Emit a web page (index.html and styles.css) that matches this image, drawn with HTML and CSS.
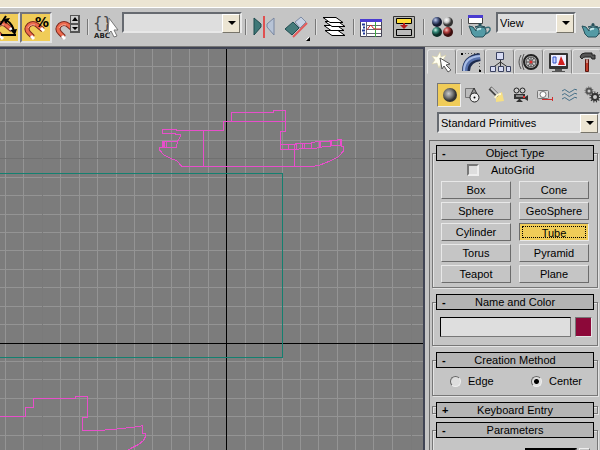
FILE: index.html
```
<!DOCTYPE html>
<html lang="en">
  <head>
    <meta charset="UTF-8" />
    <meta name="viewport" content="width=device-width, initial-scale=1.0" />
    <title>Modeler</title>
    <link rel="stylesheet" href="styles.css">
  </head>
  <body>
    <div class="menu-strip"></div>

    <div class="toolbar">
      <button class="tool wide snap on" aria-label="Angle snap">
        <svg viewBox="-10 14 28 28" width="28" height="28">
          <g id="magnet" transform="translate(-31 0)">
            <path d="M33 37L29 33Q25 29 29 25Q33 22 37 25L43 30" fill="none" stroke="#7c2a20" stroke-width="5" />
            <path d="M33 37L29 33Q25 29 29 25Q33 22 37 25L43 30" fill="none" stroke="#ee6a4e" stroke-width="3" />
            <path d="M28 28Q30 24 35 25" fill="none" stroke="#f9b09c" />
            <path d="M31 36l3 3M41 28l3 3" stroke="#fff" stroke-width="3" />
          </g>
          <path d="M1 35H16M0 25L6 16M6 20Q13 24 14 32" fill="none" stroke="#000" stroke-width="2" />
          <path d="M3 19l7-1-4 6zM10 30l7-1-2 6z" />
        </svg>
      </button>
      <button class="tool wide snap on" aria-label="Percent snap">
        <svg viewBox="22 14 28 28" width="28" height="28">
          <use href="#magnet" x="31" />
          <text x="35" y="27" class="icon-percent">%</text>
        </svg>
      </button>
      <button class="tool wide" aria-label="Spinner snap">
        <svg viewBox="52 8 32 38" width="32" height="38">
          <use href="#magnet" x="62" />
          <path d="M70 15h10v18H70z" fill="#555" />
          <path d="M71 16h7v7h-7zM71 25h7v6h-7z" fill="#ccc" />
          <path d="M72 21h6l-3-4zM72 27h6l-3 3z" />
        </svg>
      </button>
      <span class="separator"></span>
      <button class="tool" aria-label="Named selection sets">
        <svg viewBox="92 8 30 38" width="30" height="38">
          <text x="93" y="28" class="icon-braces">{}</text>
          <text x="94" y="38" class="icon-abc">ABC</text>
          <path d="M109 18l9 12h-4l3 6-3 1-3-6-3 3z" fill="#fff" stroke="#777" />
        </svg>
      </button>
      <div class="dropdown named-sets">
        <select aria-label="Selection set"><option></option></select>
      </div>
      <span class="separator"></span>
      <button class="tool" aria-label="Mirror">
        <svg viewBox="250 8 30 38" width="30" height="38">
          <path d="M254 18l7 6v3l-7 8z" fill="#3f7878" stroke="#1d4a4d" />
          <path d="M274 18l-7 6v3l7 8z" fill="#b7c3d6" stroke="#7886a0" />
          <path d="M264 16v22" stroke="#e05050" stroke-width="2" />
        </svg>
      </button>
      <button class="tool wide" aria-label="Align">
        <svg viewBox="280 8 32 38" width="32" height="38">
          <path d="M285 29l8-7 6 6-7 7z" fill="#467b7b" stroke="#1e4c50" />
          <path d="M295 22l6-5 5 5-6 6z" fill="#c7d2e3" stroke="#7d8ba4" />
          <path d="M293 37l14-14" stroke="#e25a5a" stroke-width="2" />
          <path d="M310 37v4h-4z" />
          <path d="M309 37l-3 3" stroke="#fff" />
        </svg>
      </button>
      <span class="separator"></span>
      <button class="tool" aria-label="Layers">
        <svg viewBox="320 8 30 38" width="30" height="38">
          <g fill="#fff" stroke="#000">
            <path d="M325 30.500h13l7 5h-13z" />
            <path d="M324 25.500h13l7 5h-13z" />
            <path d="M325 21.500h13l7 5h-13z" />
            <path d="M323 17.500h13l7 5h-13z" />
          </g>
        </svg>
      </button>
      <span class="separator"></span>
      <button class="tool" aria-label="Curve editor">
        <svg viewBox="358 8 30 38" width="30" height="38">
          <path d="M360.500 19.500h21v17h-21z" fill="#fff" stroke="#445" />
          <path d="M360 19h22v3h-22z" fill="#4a3cd0" />
          <path d="M362 24.500h3M363 27.500h2M362 30.500h3M363 33.500h2" stroke="#223a9a" stroke-width="2" />
          <path d="M366.500 22v15M366 25.500h15M366 29.500h15M366 33.500h15" stroke="#667" />
          <path d="M375.500 22v15" stroke="#3faa3f" />
          <path d="M367 30l2-3 2-2 2 3 2 1h6" fill="none" stroke="#d03030" />
        </svg>
      </button>
      <button class="tool wide" aria-label="Schematic view">
        <svg viewBox="388 8 32 38" width="32" height="38">
          <path d="M393.500 16.500h21v21h-21z" fill="#b9b9b5" stroke="#333" />
          <path d="M396.500 18.500h15v5h-15z" fill="#ffde38" stroke="#000" />
          <path d="M396.500 29.500h15v6h-15z" fill="#bbb" stroke="#000" />
          <path d="M403 23h2v2h3l-4 4-4-4h3z" fill="#b51d1d" />
        </svg>
      </button>
      <span class="separator"></span>
      <button class="tool" aria-label="Material editor">
        <svg viewBox="428 8 30 38" width="30" height="38">
          <defs>
            <radialGradient id="blue" cx=".35" cy=".3"><stop stop-color="#c3cbe8" /><stop offset=".5" stop-color="#56658f" /><stop offset="1" stop-color="#151a30" /></radialGradient>
            <radialGradient id="white" cx=".35" cy=".3"><stop stop-color="#fff" /><stop offset=".5" stop-color="#ccc" /><stop offset="1" stop-color="#333" /></radialGradient>
            <radialGradient id="green" cx=".35" cy=".3"><stop stop-color="#c8f0e4" /><stop offset=".5" stop-color="#318474" /><stop offset="1" stop-color="#0b2e28" /></radialGradient>
            <radialGradient id="red" cx=".35" cy=".3"><stop stop-color="#f4c4c0" /><stop offset=".5" stop-color="#b5403f" /><stop offset="1" stop-color="#3c0e0e" /></radialGradient>
            <radialGradient id="gray" cx=".4" cy=".4"><stop stop-color="#ccc" /><stop offset=".6" stop-color="#777" /><stop offset="1" stop-color="#333" /></radialGradient>
          </defs>
          <circle cx="437" cy="22" r="5" fill="url(#blue)" />
          <circle cx="448" cy="22" r="5" fill="url(#white)" />
          <circle cx="437" cy="32" r="5" fill="url(#green)" />
          <circle cx="448" cy="32" r="5" fill="url(#red)" />
        </svg>
      </button>
      <span class="separator"></span>
      <button class="tool" aria-label="Render scene">
        <svg viewBox="466 8 30 38" width="30" height="38">
          <path d="M468.500 15.500h14v8h-14z" fill="#fff" stroke="#444" />
          <path d="M468 15h15v3h-15z" fill="#4a3cd0" />
          <g id="teapot">
            <path d="M485 28q6-2 5 2-1 3-5 4" fill="none" stroke="#376d78" stroke-width="1.500" />
            <path d="M469 26l4 1 3 4v-2q4-4 9-1 3 5-2 9h-8q-4-3-4-6z" fill="#539aa5" stroke="#28515a" />
            <path d="M475 27q5-3 10 0z" fill="#86bcc4" stroke="#28515a" />
            <circle cx="480" cy="24.500" r="1.500" fill="#28515a" />
            <path d="M477 30q2-2 4-1" fill="none" stroke="#c2e5e8" stroke-width="2" />
          </g>
        </svg>
      </button>
      <div class="dropdown render-view">
        <select aria-label="Render view"><option>View</option></select>
      </div>
      <button class="tool" aria-label="Quick render">
        <svg viewBox="576 8 30 38" width="30" height="38"><use href="#teapot" x="113" /></svg>
      </button>
    </div>

    <div class="workspace">
      <main class="viewport">
        <svg viewBox="0 49 423 401" preserveAspectRatio="xMinYMin slice" shape-rendering="crispEdges">
          <path class="grid" d="M5.500 49v401M23.500 49v401M60.500 49v401M79.500 49v401M97.500 49v401M116.500 49v401M134.500 49v401M152.500 49v401M171.500 49v401M189.500 49v401M208.500 49v401M245.500 49v401M263.500 49v401M282.500 49v401M300.500 49v401M318.500 49v401M337.500 49v401M355.500 49v401M373.500 49v401M392.500 49v401" />
          <path class="grid" d="M0 66.500h423M0 84.500h423M0 103.500h423M0 121.500h423M0 140.500h423M0 177.500h423M0 195.500h423M0 214.500h423M0 232.500h423M0 250.500h423M0 269.500h423M0 287.500h423M0 306.500h423M0 324.500h423M0 361.500h423M0 379.500h423M0 398.500h423M0 416.500h423M0 435.500h423" />
          <path class="grid-major" d="M0 158.500h423" />
          <path class="grid-gap" d="M42.500 49v401M411.500 49v401" />
          <path class="axis" d="M226.500 49v401M0 343.500h423" />
          <path class="box" d="M0 173.500h282.500v183.500M0 357.500h283" />
          <g class="ship">
            <path d="M162.500 129.500H176V130.500H223.500V121.500H285M231.500 121V112.500H273.500V110.500H285.500V131.500H280.500V149.500H295L304 148.500H316L318 147.500L327 146.500L335 145.500H341" />
            <path d="M280.500 144.500H295V143.500H311V142.500L320 141.500H329V140.500H337L338 139.500H341.500V146.500H343.500V151L338 157L330 161L320 165L313 166.500H182L177 161L170 158L164 155L159.500 150V147.500H176.500L177.500 141.500L180.500 136V134.500H175.500V133.500H162.500V129" />
            <path d="M203.500 130v36M294.500 144v22M162.500 141.500H177M162.500 141v6M163.500 141v6M164.500 141v6M166.500 141v6M288.500 144v5M296.500 143v6M302.500 143v5M304.500 143v5M311.500 142v6M319.500 141v6M320.500 141v6M330.500 140v6M331.500 140v6M340.500 139v6" />
          </g>
          <path class="ship" d="M0 416.500h25.500v-9h8v-9h42v-2h12v21h-5v13h15l15-1 9-1 10-1 8-1 3-1v8h3v3l-2 4-5 4-8 4-4 3" />
        </svg>
      </main>

      <aside class="command-panel">
        <nav class="tabs">
          <button class="tab active" aria-label="Create">
            <svg viewBox="428 50 27 24" width="27" height="24">
              <path d="M440 52l1 5 5-2-3 5 3 3-5 0-2 5-2-5-5 1 3-4-3-4 5 1z" fill="#fffef0" stroke="#d8cf9b" stroke-width="0.500" />
              <path d="M440 58l10 6-4 1 5 5-3 2-4-6-2 3z" fill="#fff" stroke="#555" />
            </svg>
          </button>
          <button class="tab" aria-label="Modify">
            <svg viewBox="457 50 27 24" width="27" height="24">
              <path d="M462 53.500h17.500v17" fill="none" stroke="#555" stroke-dasharray="1 2" />
              <path d="M466 71q0-12 14-14" fill="none" stroke="#1d2b4e" stroke-width="8" />
              <path d="M465 71q0-13 15-14" fill="none" stroke="#5872ac" stroke-width="5" />
              <path d="M464 71q0-14 16-15" fill="none" stroke="#a9bde6" stroke-width="2" />
              <path d="M461 53h2v2h-2zM479 70h2v2h-2z" />
            </svg>
          </button>
          <button class="tab" aria-label="Hierarchy">
            <svg viewBox="486 50 27 24" width="27" height="24">
              <path d="M500.500 60v7M493.500 67l7-5 7 5" fill="none" stroke="#333" />
              <path d="M496.500 52.500h7v7h-7zM490.500 66.500h5v5h-5zM498.500 66.500h5v5h-5zM506.500 66.500h4v5h-4z" fill="#d8dcf4" stroke="#3a4260" />
            </svg>
          </button>
          <button class="tab" aria-label="Motion">
            <svg viewBox="515 50 27 24" width="27" height="24">
              <path d="M521 55q-4 7 0 14M524 54q-4 8 0 16" fill="none" stroke="#555" />
              <circle cx="531" cy="62" r="7" fill="#ccc" stroke="#222" stroke-width="2" />
              <circle cx="531" cy="62" r="5" fill="none" stroke="#555" />
              <path d="M526 62h10M531 57v10M528 58l6 8M534 58l-6 8" stroke="#444" />
              <circle cx="531" cy="62" r="1.500" fill="#e03030" />
            </svg>
          </button>
          <button class="tab" aria-label="Display">
            <svg viewBox="544 50 27 24" width="27" height="24">
              <rect x="549" y="53" width="19" height="16" rx="1" fill="#333" />
              <rect x="551" y="55" width="15" height="11" fill="#eef" />
              <path d="M553 57h3v6h-3z" fill="#c8d4ff" stroke="#3554c8" />
              <path d="M558 65l3-9 4 9z" fill="#d02020" />
              <path d="M555 69h7v2h3v1h-13v-1h3z" fill="#555" />
            </svg>
          </button>
          <button class="tab" aria-label="Utilities">
            <svg viewBox="573 50 27 24" width="27" height="24">
              <path d="M580 57q1-4 5-4h7v2h3v4h-3l-1-2h-6q-2 0-3 2z" fill="#555" stroke="#222" />
              <path d="M585.500 59.500h3v12h-3z" fill="#c03a28" stroke="#5c1811" />
              <path d="M587 58v5" stroke="#ddd" />
            </svg>
          </button>
        </nav>

        <div class="categories">
          <button class="category on" aria-label="Geometry">
            <svg viewBox="438 84 22 22" width="22" height="22"><circle cx="450" cy="95" r="7" fill="url(#gray)" /></svg>
          </button>
          <button class="category" aria-label="Shapes">
            <svg viewBox="462 84 22 22" width="22" height="22">
              <path d="M465.500 88.500h9v9h-9z" fill="#bbb" stroke="#777" />
              <path d="M470 96l4-8 4 8z" fill="#999" stroke="#333" />
              <circle cx="474.500" cy="97.500" r="4.500" fill="#eee" stroke="#222" />
              <circle cx="474.500" cy="97.500" r="1" />
            </svg>
          </button>
          <button class="category" aria-label="Lights">
            <svg viewBox="486 84 22 22" width="22" height="22">
              <path d="M496 95l6-3 2 9-8 1z" fill="#f6df83" />
              <path d="M490 88l8 8" stroke="#444" stroke-width="4" />
              <path d="M491 88l7 7" stroke="#ccc" stroke-width="2" />
              <path d="M495 98q2-4 6-4" fill="none" stroke="#fff8d0" stroke-width="2" />
            </svg>
          </button>
          <button class="category" aria-label="Cameras">
            <svg viewBox="510 84 22 22" width="22" height="22">
              <circle cx="516.500" cy="90.500" r="2.500" fill="#ccc" stroke="#222" />
              <circle cx="522.500" cy="90.500" r="2.500" fill="#ccc" stroke="#222" />
              <path d="M514 94h11v5h-11zM525 97l3-2v6l-3-2zM519 99l-3 3h7l-3-3z" fill="#333" />
              <path d="M516 96h7" stroke="#ddd" />
              <path d="M523 96h2v2h-2z" fill="#e03030" />
            </svg>
          </button>
          <button class="category" aria-label="Helpers">
            <svg viewBox="534 84 22 22" width="22" height="22">
              <rect x="537.500" y="90.500" width="11" height="8" rx="1" fill="#ddd" stroke="#777" />
              <circle cx="543" cy="94.500" r="3" fill="#fff" stroke="#777" />
              <path d="M542 99.500h10M552.500 97v4" fill="none" stroke="#d03030" />
            </svg>
          </button>
          <button class="category" aria-label="Space warps">
            <svg viewBox="558 84 22 22" width="22" height="22">
              <path id="wave" d="M562 91q3-3 5 0t5 0 5-1" fill="none" stroke="#456f87" />
              <use href="#wave" y="4" />
              <use href="#wave" y="8" />
            </svg>
          </button>
          <button class="category" aria-label="Systems">
            <svg viewBox="582 84 22 22" width="22" height="22">
              <circle cx="589" cy="91" r="2.500" fill="#ccc" stroke="#555" stroke-width="2" />
              <circle cx="589" cy="91" r="4" fill="none" stroke="#555" stroke-dasharray="1 1.500" />
              <circle cx="595" cy="97" r="3" fill="#ccc" stroke="#333" stroke-width="2" />
              <circle cx="595" cy="97" r="4.500" fill="none" stroke="#333" stroke-dasharray="1 1.500" stroke-width="2" />
            </svg>
          </button>
        </div>

        <div class="dropdown subcategory">
          <select aria-label="Object category"><option>Standard Primitives</option></select>
        </div>

        <div class="rollups">
          <section class="rollup">
            <button class="rollup-header"><span>-</span>Object Type</button>
            <div class="rollup-body object-type">
              <label class="autogrid"><input type="checkbox">AutoGrid</label>
              <div class="object-buttons">
                <button>Box</button>
                <button>Cone</button>
                <button>Sphere</button>
                <button>GeoSphere</button>
                <button>Cylinder</button>
                <button class="pressed">Tube</button>
                <button>Torus</button>
                <button>Pyramid</button>
                <button>Teapot</button>
                <button>Plane</button>
              </div>
            </div>
          </section>

          <section class="rollup">
            <button class="rollup-header"><span>-</span>Name and Color</button>
            <div class="rollup-body name-color">
              <input type="text" aria-label="Object name">
              <button class="swatch" aria-label="Object color"></button>
            </div>
          </section>

          <section class="rollup">
            <button class="rollup-header"><span>-</span>Creation Method</button>
            <div class="rollup-body method">
              <label><input type="radio" name="method">Edge</label>
              <label><input type="radio" name="method" checked>Center</label>
            </div>
          </section>

          <section class="rollup closed">
            <button class="rollup-header"><span>+</span>Keyboard Entry</button>
          </section>

          <section class="rollup">
            <button class="rollup-header"><span>-</span>Parameters</button>
            <div class="rollup-body parameters">
              <input type="text" aria-label="Radius 1">
              <button class="spinner" aria-label="Change radius 1"></button>
            </div>
          </section>
        </div>
      </aside>
    </div>
  </body>
</html>
```
FILE: styles.css
```
* {
  box-sizing: border-box;
}

body {
  display: flex;
  flex-direction: column;
  height: 100vh;
  margin: 0;
  overflow: hidden;
  background-color: #c5c5c5;
  color: #000;
  font-family: "Liberation Sans", Arial, sans-serif;
  font-size: 11px;
  line-height: 14px;
}

button,
input,
select {
  margin: 0;
  padding: 0;
  border: 0;
  border-radius: 0;
  background: none;
  color: inherit;
  font: inherit;
}

svg {
  display: block;
}

.menu-strip {
  flex: none;
  height: 8px;
  background-color: #ece5d3;
  border-bottom: 1px solid #fff;
}

/* toolbar */

.toolbar {
  display: flex;
  flex: none;
  align-items: center;
  height: 39px;
  overflow: hidden;
  border-bottom: 1px solid #777;
}

.tool {
  flex: none;
  width: 30px;
}

.wide {
  width: 32px;
}

.snap {
  height: 31px;
  border: 2px solid;
  border-color: #74747c #e4e4e4 #e4e4e4 #74747c;
}

.snap:first-child {
  margin-left: -12px;
}

.on {
  background-color: #f0cc58;
}

.separator {
  flex: none;
  width: 2px;
  height: 16px;
  margin: 0 3px;
  border-left: 1px solid #777;
  border-right: 1px solid #e0e0e0;
}

.icon-percent {
  font: bold 14px "DejaVu Sans", sans-serif;
}

.icon-braces {
  font: 15px "DejaVu Sans", sans-serif;
  fill: #444;
}

.icon-abc {
  font: bold 7px "DejaVu Sans", sans-serif;
  fill: #222;
}

.dropdown {
  position: relative;
  flex: none;
  height: 21px;
}

.dropdown select {
  display: block;
  width: 100%;
  height: 100%;
  padding-left: 2px;
  appearance: none;
  background-color: #dedede;
  border: 2px solid;
  border-color: #666a70 #e8e8e8 #e8e8e8 #666a70;
}

.dropdown::before {
  content: "";
  position: absolute;
  top: 2px;
  right: 2px;
  width: 16px;
  height: 17px;
  background-color: #ece5d3;
  border: 1px solid;
  border-color: #fff #77746a #77746a #fff;
  pointer-events: none;
}

.dropdown::after {
  content: "";
  position: absolute;
  top: 9px;
  right: 6px;
  border: 4px solid transparent;
  border-top-color: #000;
  border-bottom: 0;
  pointer-events: none;
}

.toolbar .dropdown {
  align-self: flex-start;
  margin-top: 4px;
}

.named-sets {
  width: 120px;
}

.render-view {
  width: 80px;
}

/* viewport */

.workspace {
  display: flex;
  flex: 1;
  min-height: 0;
}

.viewport {
  flex: 1;
  min-width: 0;
  background-color: #7c7c7c;
  border-top: 2px solid #404454;
  border-right: 2px solid #404454;
}

.viewport svg {
  width: 100%;
  height: 100%;
}

.viewport path {
  fill: none;
}

.grid {
  stroke: #949494;
}

.grid-major {
  stroke: #707070;
}

.grid-gap {
  stroke: #7a7a7a;
}

.axis {
  stroke: #000;
}

.box {
  stroke: #148070;
}

.ship {
  stroke: #e84fcb;
}

/* command panel */

.command-panel {
  flex: none;
  width: 175px;
  padding-top: 2px;
  overflow: hidden;
}

.tabs {
  display: flex;
  padding-left: 2px;
}

.tab {
  flex: none;
  width: 29px;
  height: 25px;
  border: 1px solid;
  border-color: #e4e4e4 #858585 #e4e4e4 #e4e4e4;
  border-radius: 3px 3px 0 0;
}

.tab.active {
  border-bottom-color: #c5c5c5;
}

.categories {
  display: flex;
  margin-top: 9px;
  padding-left: 12px;
}

.category {
  flex: none;
  width: 24px;
  height: 24px;
  border: 1px solid transparent;
}

.category.on {
  border-color: #777 #eee #eee #777;
}

.subcategory {
  margin: 5px 0 0 12px;
}

.rollups {
  margin: 7px 0 0 4px;
  padding: 4px 2px 0;
  border: solid #6b6b6b;
  border-width: 1px 0 0 1px;
}

.rollup {
  position: relative;
  margin-bottom: 6px;
  padding: 0 4px;
}

/* etched frame that starts halfway down the header */
.rollup::before {
  content: "";
  position: absolute;
  inset: 8px 0 0;
  border: 1px solid #777;
  box-shadow: 1px 1px #e4e4e4, inset 1px 1px #e4e4e4;
  pointer-events: none;
}

.rollup.closed {
  margin-bottom: 4px;
}

.rollup.closed::before {
  inset: 4px 0;
}

.rollup-header {
  display: block;
  position: relative;
  width: 100%;
  height: 16px;
  background-color: #b4b4b4;
  border: 1px solid #000;
  line-height: 14px;
}

.rollup-header span {
  position: absolute;
  left: 5px;
  font-weight: bold;
}

.rollup-body {
  position: relative;
  padding: 7px 4px 9px;
}

.object-type {
  padding: 3px 5px 5px;
}

.autogrid {
  display: flex;
  align-items: center;
  gap: 12px;
  height: 12px;
  margin: 0 0 5px 26px;
}

.autogrid input {
  width: 12px;
  height: 12px;
  appearance: none;
  background-color: #dedede;
  border: 2px solid;
  border-color: #777 #eee #eee #777;
}

.object-buttons {
  display: grid;
  grid-template-columns: 1fr 1fr;
  gap: 3px 8px;
}

.object-buttons button {
  height: 18px;
  border: 1px solid;
  border-color: #e8e8e8 #6c6c6c #6c6c6c #e8e8e8;
}

.object-buttons .pressed {
  padding-top: 1px;
  background-color: #f0cc58;
  border-color: #6c6c6c #e8e8e8 #e8e8e8 #6c6c6c;
  outline: 1px dotted #000;
  outline-offset: -4px;
}

.name-color {
  display: flex;
  gap: 4px;
  padding-right: 2px;
}

.name-color input {
  flex: 1;
  min-width: 0;
  height: 20px;
  background-color: #dedede;
  border: 1px solid;
  border-color: #000 #777 #777 #000;
}

.swatch {
  width: 17px;
  height: 20px;
  background-color: #8c0839;
  border: 1px solid;
  border-color: #777 #e4e4e4 #e4e4e4 #777;
}

.method {
  display: flex;
  justify-content: space-between;
  padding: 7px 12px 9px 14px;
}

.method label {
  display: flex;
  align-items: center;
  gap: 7px;
  height: 12px;
}

.method input {
  width: 11px;
  height: 11px;
  appearance: none;
  background-color: #dedede;
  border: 1px solid;
  border-color: #666 #eee #eee #666;
  border-radius: 50%;
}

.method input:checked {
  background-image: radial-gradient(circle, #000 2px, transparent 3px);
}

.parameters {
  display: flex;
  justify-content: flex-end;
  gap: 2px;
  padding: 10px 4px 6px;
}

.parameters input {
  width: 52px;
  height: 18px;
  background-color: #dedede;
  border: 2px solid;
  border-color: #000 #777 #777 #000;
}

.spinner {
  width: 11px;
  height: 18px;
  border: 1px solid;
  border-color: #eee #777 #777 #eee;
}
```
